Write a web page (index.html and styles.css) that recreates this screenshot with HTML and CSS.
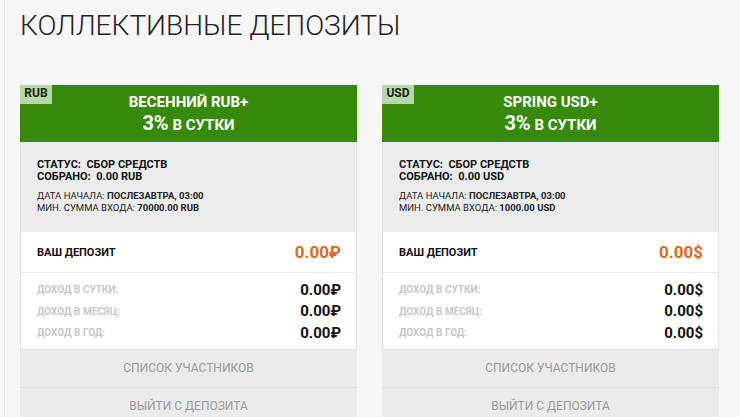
FILE: index.html
```html
<!DOCTYPE html>
<html>
<head>
    <meta charset="UTF-8">
    <title>Коллективные депозиты</title>
    <link rel="stylesheet" href="styles.css">
</head>
<body>
    <div class="page">
        <h1>Коллективные депозиты</h1>
        <div class="cards">
            <div class="card">
                <div class="card-head">
                    <span class="badge">RUB</span>
                    <div class="name">Весенний RUB+</div>
                    <div class="rate"><span class="pct">3%</span> в сутки</div>
                </div>
                <div class="info">
                    <div class="status">Статус: &nbsp;Сбор средств</div>
                    <div class="status">Собрано: &nbsp;0.00 RUB</div>
                    <div class="meta">Дата начала: <b>послезавтра, 03:00</b></div>
                    <div class="meta">Мин. сумма входа: <b>70000.00 RUB</b></div>
                </div>
                <div class="deposit">
                    <span>Ваш депозит</span>
                    <span class="amount">0.00₽</span>
                </div>
                <div class="income">
                    <div class="row"><span>Доход в сутки:</span><b>0.00₽</b></div>
                    <div class="row"><span>Доход в месяц:</span><b>0.00₽</b></div>
                    <div class="row"><span>Доход в год:</span><b>0.00₽</b></div>
                </div>
                <div class="btn">Список участников</div>
                <div class="btn">Выйти с депозита</div>
            </div>

            <div class="card">
                <div class="card-head">
                    <span class="badge">USD</span>
                    <div class="name">Spring USD+</div>
                    <div class="rate"><span class="pct">3%</span> в сутки</div>
                </div>
                <div class="info">
                    <div class="status">Статус: &nbsp;Сбор средств</div>
                    <div class="status">Собрано: &nbsp;0.00 USD</div>
                    <div class="meta">Дата начала: <b>послезавтра, 03:00</b></div>
                    <div class="meta">Мин. сумма входа: <b>1000.00 USD</b></div>
                </div>
                <div class="deposit">
                    <span>Ваш депозит</span>
                    <span class="amount">0.00$</span>
                </div>
                <div class="income">
                    <div class="row"><span>Доход в сутки:</span><b>0.00$</b></div>
                    <div class="row"><span>Доход в месяц:</span><b>0.00$</b></div>
                    <div class="row"><span>Доход в год:</span><b>0.00$</b></div>
                </div>
                <div class="btn">Список участников</div>
                <div class="btn">Выйти с депозита</div>
            </div>
        </div>
    </div>
</body>
</html>
```

FILE: styles.css
```css
body {
    margin: 0;
    padding: 0;
    background-color: #f7f7f7;
    font-family: Roboto, Arial, sans-serif;
    color: #111;
}
.page {
    padding: 8px 20px 0 15px;
    border-left: 1px solid #e6e6e6;
    margin-left: 4px;
}
h1 {
    margin: 0;
    font-size: 28px;
    font-weight: 300;
    text-transform: uppercase;
    color: #222;
    line-height: 36px;
}
.cards {
    display: flex;
    gap: 25px;
    margin-top: 41px;
}
.card {
    width: 337px;
    box-sizing: border-box;
    border: 1px solid #e0e0e0;
    border-top: none;
    background-color: #fff;
}
.card-head {
    position: relative;
    background-color: #368a0a;
    color: #fff;
    text-align: center;
    height: 57px;
    box-sizing: border-box;
    padding-top: 8px;
    font-weight: bold;
    text-transform: uppercase;
    margin: 0 -1px;
}
.badge {
    position: absolute;
    left: 0;
    top: 0;
    width: 32px;
    height: 19px;
    background-color: #b7d8a2;
    color: #1a1a1a;
    font-size: 12px;
    line-height: 17px;
    text-align: center;
}
.name {
    font-size: 15px;
    line-height: 18px;
}
.rate {
    font-size: 15px;
    line-height: 24px;
}
.rate .pct {
    font-size: 20px;
}
.info {
    background-color: #ececec;
    padding: 17px 16px 15px;
    height: 90px;
    box-sizing: border-box;
    text-transform: uppercase;
}
.status {
    font-size: 11px;
    font-weight: bold;
    line-height: 12px;
}
.meta {
    font-size: 9.5px;
    line-height: 12px;
    color: #222;
}
.status + .meta {
    margin-top: 7px;
}
.deposit {
    display: flex;
    justify-content: space-between;
    align-items: center;
    height: 40px;
    padding: 0 15px 0 16px;
    border-bottom: 1px solid #e6e6e6;
    font-size: 11px;
    font-weight: bold;
    text-transform: uppercase;
}
.deposit .amount {
    color: #e0691d;
    font-size: 17px;
}
.income {
    padding: 6px 15px 5px 16px;
}
.income .row {
    display: flex;
    justify-content: space-between;
    align-items: center;
    height: 21.5px;
}
.income .row span {
    color: #c8c8c8;
    font-size: 10px;
    font-weight: bold;
    text-transform: uppercase;
}
.income .row b {
    font-size: 15px;
}
.btn {
    background-color: #ebebeb;
    color: #999;
    text-align: center;
    text-transform: uppercase;
    font-size: 12px;
    height: 37px;
    line-height: 37px;
    border-top: 1px solid #e0e0e0;
    margin: 0 -1px;
}
.btn:first-of-type {
    border-top: none;
}
```
